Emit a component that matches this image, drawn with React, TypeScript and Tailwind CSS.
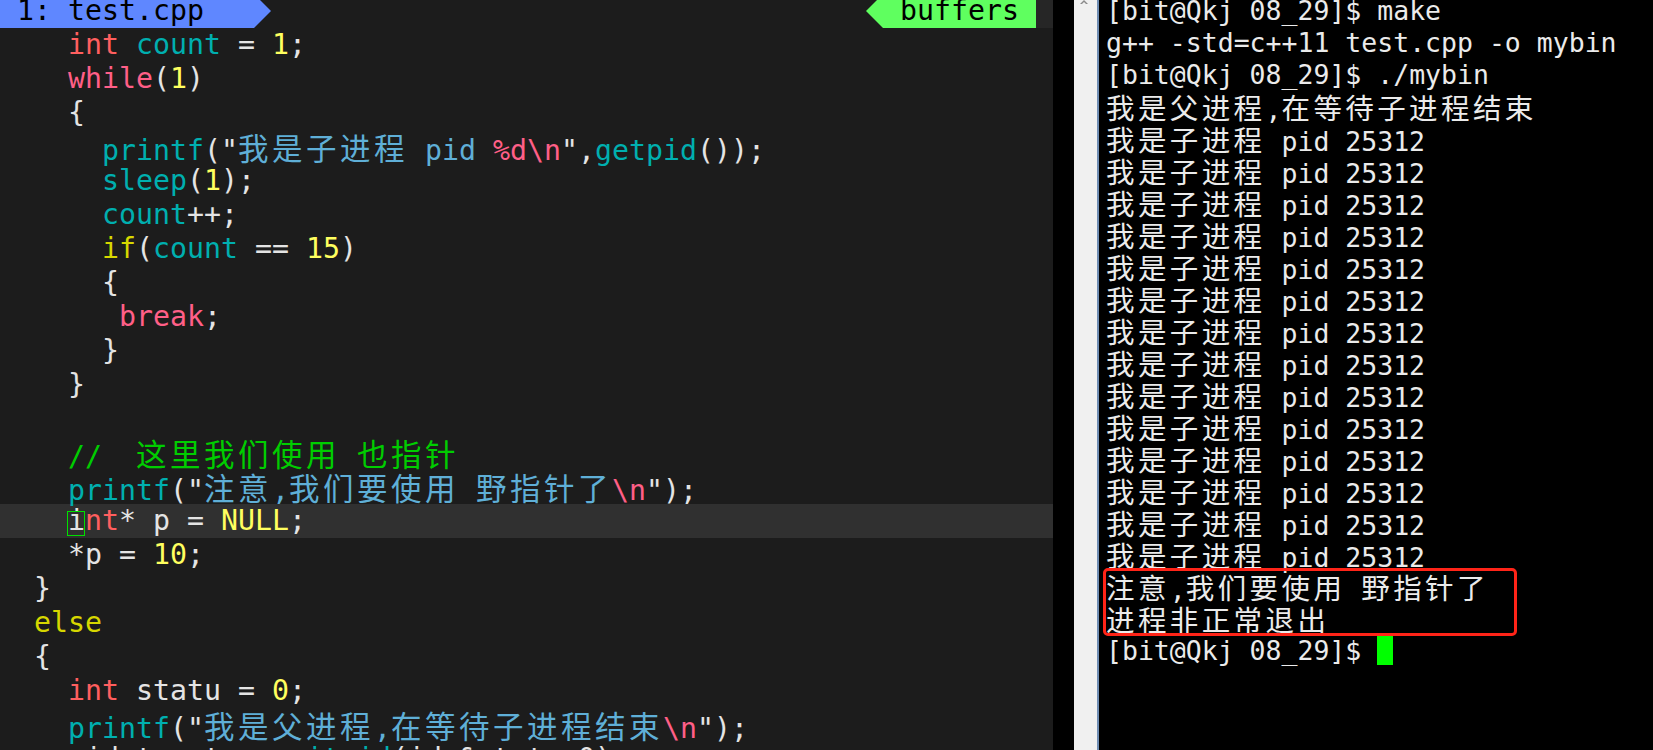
import type { ReactNode } from "react";

type Tok = [string, string];

const W = "text-[#e4e4e4]";
const R = "text-[#ff5f5f]";
const P = "text-[#ff5f87]";
const T = "text-[#00afaf]";
const S = "text-[#5fafd7]";
const Y = "text-[#ffff5f]";
const K = "text-[#d7d700]";
const G = "text-[#00cd00]";

const CJK_RE = /([\u3400-\u9fff]+)/;

// wraps runs of CJK so that each glyph takes two cells
const withCjk = (text: string, cjkClass: string): ReactNode[] =>
  text.split(CJK_RE).map((part, i) =>
    CJK_RE.test(part) ? (
      <span key={i} className={cjkClass}>
        {part}
      </span>
    ) : (
      part
    )
  );

const EDITOR_CJK = "font-['Noto_Sans_CJK_SC',sans-serif] text-[30.5px] tracking-[3.5px]";
const TERM_CJK = "font-['Noto_Sans_CJK_SC',sans-serif] text-[28.5px] tracking-[3.4px]";

const code: Tok[][] = [
  [["    ", W], ["int", R], [" ", W], ["count", T], [" = ", W], ["1", Y], [";", W]],
  [["    ", W], ["while", P], ["(", W], ["1", Y], [")", W]],
  [["    {", W]],
  [
    ["      ", W],
    ["printf", T],
    ["(\"", W],
    ["我是子进程 pid ", S],
    ["%d\\n", P],
    ["\",", W],
    ["getpid", T],
    ["());", W],
  ],
  [["      ", W], ["sleep", T], ["(", W], ["1", Y], [");", W]],
  [["      ", W], ["count", T], ["++;", W]],
  [["      ", W], ["if", K], ["(", W], ["count", T], [" == ", W], ["15", Y], [")", W]],
  [["      {", W]],
  [["       ", W], ["break", P], [";", W]],
  [["      }", W]],
  [["    }", W]],
  [["", W]],
  [["    //  这里我们使用 也指针", G]],
  [
    ["    ", W],
    ["printf", T],
    ["(\"", W],
    ["注意,我们要使用 野指针了", S],
    ["\\n", P],
    ["\");", W],
  ],
];

const codeAfter: Tok[][] = [
  [["    *p = ", W], ["10", Y], [";", W]],
  [["  }", W]],
  [["  ", W], ["else", K]],
  [["  {", W]],
  [["    ", W], ["int", R], [" statu = ", W], ["0", Y], [";", W]],
  [
    ["    ", W],
    ["printf", T],
    ["(\"", W],
    ["我是父进程,在等待子进程结束", S],
    ["\\n", P],
    ["\");", W],
  ],
  [["    pid_t ret = ", W], ["waitpid", T], ["(id,&statu,0);", W]],
];

const CodeLine = ({ toks }: { toks: Tok[] }) => (
  <div className="h-[34px] whitespace-pre">
    {toks.map(([text, cls], i) => (
      <span key={i} className={cls}>
        {withCjk(text, EDITOR_CJK)}
      </span>
    ))}
  </div>
);

const term: string[] = [
  "[bit@Qkj 08_29]$ make",
  "g++ -std=c++11 test.cpp -o mybin",
  "[bit@Qkj 08_29]$ ./mybin",
  "我是父进程,在等待子进程结束",
  ...Array.from({ length: 14 }, () => "我是子进程 pid 25312"),
];

const TermLine = ({ text }: { text: string }) => (
  <div className="h-[32px] whitespace-pre">{withCjk(text, TERM_CJK)}</div>
);

export default function App() {
  return (
    <div className="flex h-[750px] w-[1653px] overflow-hidden bg-black">
      {/* vim pane */}
      <div className="w-[1053px] shrink-0 bg-[#1c1c1c] font-['DejaVu_Sans_Mono',monospace] text-[28.24px] leading-[34px]">
        <div className="-mt-[6px] flex h-[34px] whitespace-pre text-black">
          <div className="w-[254px] bg-[#5f87ff]"> 1: test.cpp</div>
          <svg width="17" height="34" viewBox="0 0 17 34" className="shrink-0">
            <polygon points="0,0 17,17 0,34" fill="#5f87ff" />
          </svg>
          <div className="flex-1" />
          <svg width="17" height="34" viewBox="0 0 17 34" className="shrink-0">
            <polygon points="17,0 0,17 17,34" fill="#5fff5f" />
          </svg>
          <div className="w-[153px] bg-[#5fff5f] pl-[17px]">buffers</div>
          <div className="w-[17px] bg-[#262626]" />
        </div>

        {code.map((toks, i) => (
          <CodeLine key={i} toks={toks} />
        ))}

        <div className="h-[34px] whitespace-pre bg-[#303030]">
          <span>{"    "}</span>
          <span className="relative text-[#e4e4e4]">
            i
            <span className="absolute left-[-1px] top-[7px] h-[25px] w-[18px] border border-[#00e000]" />
          </span>
          <span className={R}>nt</span>
          <span className={W}>* p = </span>
          <span className={Y}>NULL</span>
          <span className={W}>;</span>
        </div>

        {codeAfter.map((toks, i) => (
          <CodeLine key={i} toks={toks} />
        ))}
      </div>

      {/* window gap + scroll bar */}
      <div className="w-[21px] shrink-0 bg-black" />
      <div className="w-[23px] shrink-0 bg-[#f0f0f0]">
        <svg width="23" height="8" viewBox="0 0 23 8" className="block">
          <polygon points="6,4 10,0 14,4 12,4 10,2 8,4" fill="#8a8a8a" />
        </svg>
      </div>
      <div className="w-[2px] shrink-0 bg-[#6f8db3]" />

      {/* terminal */}
      <div className="flex-1 bg-black pl-[7px] font-['DejaVu_Sans_Mono',monospace] text-[26.5px] leading-[32px] text-[#ebebeb]">
        <div className="-mt-[5px]">
          {term.map((t, i) => (
            <TermLine key={i} text={t} />
          ))}
          <div className="relative">
            <TermLine text="注意,我们要使用 野指针了" />
            <TermLine text="进程非正常退出" />
            <div className="absolute left-[-3px] top-[-3px] h-[68px] w-[414px] rounded-[5px] border-[3px] border-[#ff2418]" />
          </div>
          <div className="h-[32px] whitespace-pre">
            {"[bit@Qkj 08_29]$ "}
            <span className="inline-block h-[29px] w-[16px] bg-[#00ff00] align-[-5px]" />
          </div>
        </div>
      </div>
    </div>
  );
}
